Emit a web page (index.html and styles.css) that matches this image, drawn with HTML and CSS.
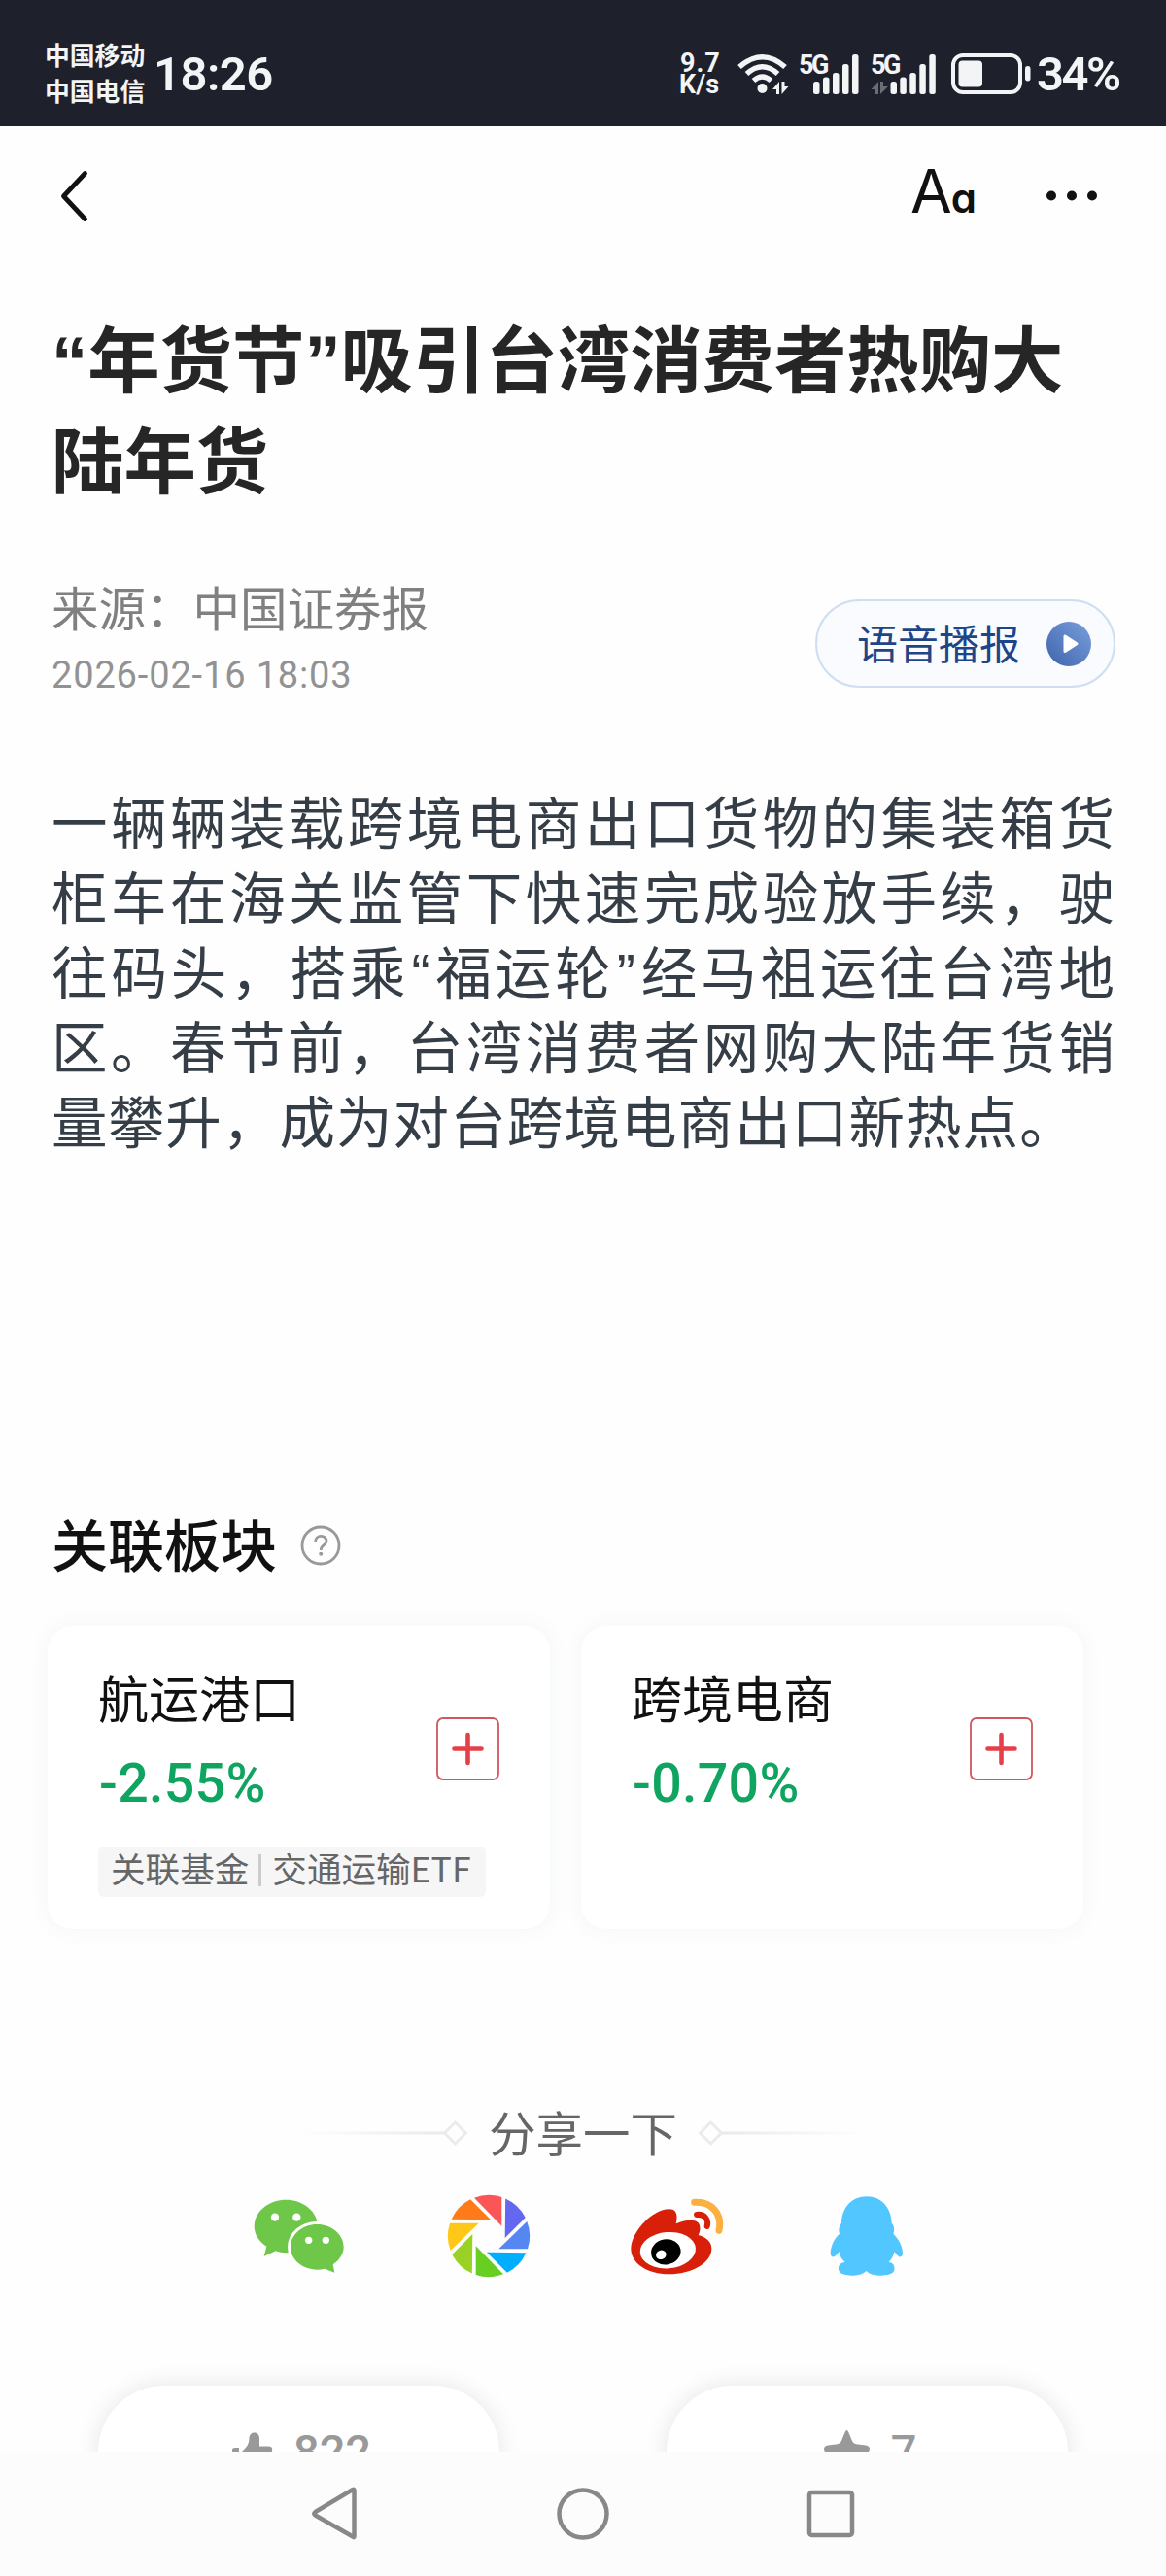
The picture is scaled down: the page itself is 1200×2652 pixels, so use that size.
FILE: index.html
```html
<!DOCTYPE html>
<html lang="zh-CN">
<head>
<meta charset="utf-8">
<title>年货节</title>
<link rel="stylesheet" href="styles.css">
</head>
<body>
<header class="status">
  <div class="carriers"><span>中国移动</span><span>中国电信</span></div>
  <div class="clock">18:26</div>
  <div class="speed"><span class="rate">9.7</span><span>K/s</span></div>
  <svg class="wifi" width="54" height="42" viewBox="758 55 54 42">
    <g fill="none" stroke="#f3f4f5" stroke-width="5.5">
      <path d="M761 69Q784.5 48.500 808 69"/>
      <path d="M768.500 76Q784.500 61.500 800.500 76"/>
      <path d="M775.500 83Q784.500 75 793.500 83"/>
    </g>
    <circle cx="784.500" cy="91" r="5" fill="#f3f4f5"/>
    <path fill="#f3f4f5" d="M795 92L802 84V97H799V92ZM804.500 84H807.500V89H811.500L804.500 97Z"/>
  </svg>
  <div class="cell">
    <span class="net">5G</span>
    <svg width="64" height="42" viewBox="820 55 64 42" fill="#f3f4f5">
      <rect x="837" y="84" width="6.500" height="13" rx="2.500"/><rect x="847" y="79.500" width="6.500" height="17.500" rx="2.500"/><rect x="857" y="75" width="6.500" height="22" rx="2.500"/><rect x="867" y="66" width="6.500" height="31" rx="2.500"/><rect x="877" y="56" width="6.500" height="41" rx="2.500"/>
    </svg>
  </div>
  <div class="cell second">
    <span class="net">5G</span>
    <svg width="69" height="42" viewBox="894 55 69 42" fill="#f3f4f5">
      <path fill="#6a6d75" d="M896.500 92L904 84V97H901V92ZM906 84H909V89H914L906 97Z"/>
      <rect x="916.500" y="84" width="6.500" height="13" rx="2.500"/><rect x="926.300" y="79.500" width="6.500" height="17.500" rx="2.500"/><rect x="936.300" y="75" width="6.500" height="22" rx="2.500"/><rect x="946.300" y="66" width="6.500" height="31" rx="2.500"/><rect x="956.300" y="56" width="6.500" height="41" rx="2.500"/>
    </svg>
  </div>
  <svg class="battery" width="82" height="42" viewBox="979 55 82 42">
    <rect x="981" y="57" width="69" height="38" rx="10" fill="none" stroke="#f3f4f5" stroke-width="4"/>
    <rect x="986.500" y="62.500" width="24.500" height="27" rx="4" fill="#f3f4f5"/>
    <rect x="1055" y="68" width="5.500" height="15.500" rx="2.700" fill="#f3f4f5"/>
  </svg>
  <div class="percent">34%</div>
</header>

<main class="screen">
  <nav class="toolbar">
    <svg width="30" height="54" viewBox="0 0 30 54"><path d="M26.500 4.500L4.500 28L26.500 51.500" fill="none" stroke="#111" stroke-width="4.800" stroke-linecap="round" stroke-linejoin="round"/></svg>
    <div class="fontsize"><span class="big">A</span><span class="small">a</span></div>
    <svg width="54" height="12" viewBox="0 0 54 12" fill="#111"><circle cx="6" cy="6.500" r="5"/><circle cx="27" cy="6.500" r="5"/><circle cx="48" cy="6.500" r="5"/></svg>
  </nav>

  <article>
    <h1><span class="q">“</span>年货节<span class="q">”</span>吸引台湾消费者热购大<br>陆年货</h1>
    <div class="meta">
      <div>
        <div class="source">来源：中国证券报</div>
        <div class="date">2026-02-16 18:03</div>
      </div>
      <button class="voice">语音播报
        <svg width="46" height="46" viewBox="0 0 46 46">
          <defs><linearGradient id="play" x1="0" y1="1" x2="1" y2="0"><stop offset="0" stop-color="#3e63ab"/><stop offset="1" stop-color="#7ba0dd"/></linearGradient></defs>
          <circle cx="23" cy="23" r="23" fill="url(#play)"/>
          <path d="M19 15V30.500L31 22.800Z" fill="#fff" stroke="#fff" stroke-width="3" stroke-linejoin="round"/>
        </svg>
      </button>
    </div>
    <p class="body">
      <span>一辆辆装载跨境电商出口货物的集装箱货</span>
      <span>柜车在海关监管下快速完成验放手续，驶</span>
      <span>往码头，搭乘<i class="q">“</i>福运轮<i class="q">”</i>经马祖运往台湾地</span>
      <span>区。春节前，台湾消费者网购大陆年货销</span>
      <span class="last">量攀升，成为对台跨境电商出口新热点。</span>
    </p>
  </article>

  <section class="related">
    <h2>关联板块
      <svg width="42" height="42" viewBox="0 0 42 42"><circle cx="21" cy="21" r="19" fill="none" stroke="#999" stroke-width="2.800"/><path d="M15.500 17.500C15.500 9.500 27 9.500 27 16.500C27 21 21.200 20.500 21.200 26" fill="none" stroke="#999" stroke-width="2.800"/><circle cx="21.200" cy="29.800" r="2" fill="#999"/></svg>
    </h2>
    <div class="cards">
      <div class="card">
        <div class="name">航运港口</div>
        <div class="change">-2.55%</div>
        <div class="tag"><span>关联基金</span><span class="bar"></span><span>交通运输ETF</span></div>
        <svg class="add" width="65" height="65" viewBox="0 0 65 65"><rect x="1" y="1" width="63" height="63" rx="6" fill="#fff" stroke="#d0565f" stroke-width="1.800"/><path d="M18.500 32.500H46.500M32.500 18V47" stroke="#e5404a" stroke-width="4.600" stroke-linecap="round"/></svg>
      </div>
      <div class="card">
        <div class="name">跨境电商</div>
        <div class="change">-0.70%</div>
        <svg class="add" width="65" height="65" viewBox="0 0 65 65"><rect x="1" y="1" width="63" height="63" rx="6" fill="#fff" stroke="#d0565f" stroke-width="1.800"/><path d="M18.500 32.500H46.500M32.500 18V47" stroke="#e5404a" stroke-width="4.600" stroke-linecap="round"/></svg>
      </div>
    </div>
  </section>

  <section class="share">
    <div class="sharetitle">
      <svg width="164" height="28" viewBox="0 0 164 28"><defs><linearGradient id="fade"><stop offset="0" stop-color="#ececec" stop-opacity="0"/><stop offset="1" stop-color="#e9e9e9"/></linearGradient></defs><rect x="-10" y="12.500" width="149" height="3" fill="url(#fade)"/><path d="M150.500 3L161.500 14L150.500 25L139.500 14Z" fill="none" stroke="#ebebeb" stroke-width="3"/></svg>
      <span>分享一下</span>
      <svg class="flip" width="164" height="28" viewBox="0 0 164 28"><rect x="-10" y="12.500" width="149" height="3" fill="url(#fade)"/><path d="M150.500 3L161.500 14L150.500 25L139.500 14Z" fill="none" stroke="#ebebeb" stroke-width="3"/></svg>
    </div>
    <div class="icons">
      <svg width="93" height="77" viewBox="95 344 279 231">
        <path fill="#6fc74a" d="M195 346C249 346 293 383 293 428C293 473 249 510 195 510Q179 510 163 504L127 521L135 490C112 475 97 453 97 428C97 383 141 346 195 346Z"/>
        <path fill="#6fc74a" stroke="#fff" stroke-width="18" paint-order="stroke" d="M291 422C336 422 373 453 373 492C373 514 360 533 340 546L345 571L314 559Q303 562 291 562C246 562 209 531 209 492C209 453 246 422 291 422Z"/>
        <g fill="#fff"><circle cx="161" cy="400" r="12.500"/><circle cx="228" cy="400" r="12.500"/><circle cx="265" cy="471" r="11"/><circle cx="318" cy="471" r="11"/></g>
      </svg>
      <svg width="84" height="84" viewBox="-42 -42 84 84">
        <defs><path id="blade" d="M-15-39.300A42 42 0 0 1 13.300-40V-10.300Z"/></defs>
        <use href="#blade" fill="#fb5655"/>
        <use href="#blade" fill="#6468f0" transform="rotate(45)"/>
        <use href="#blade" fill="#5586f2" transform="rotate(90)"/>
        <use href="#blade" fill="#00aeff" transform="rotate(135)"/>
        <use href="#blade" fill="#66cf22" transform="rotate(180)"/>
        <use href="#blade" fill="#99d224" transform="rotate(225)"/>
        <use href="#blade" fill="#ffc819" transform="rotate(270)"/>
        <use href="#blade" fill="#ff7a18" transform="rotate(315)"/>
      </svg>
      <svg width="96" height="79" viewBox="155 344 288 237">
        <path fill="#d71f09" d="M150 500C150 450 215 378 268 378C292 378 295 398 289 423C320 410 352 406 361 425C366 438 362 450 358 458C385 465 399 480 399 500C399 545 335 579 268 579C200 579 150 545 150 500Z"/>
        <ellipse cx="264" cy="505" rx="86" ry="56" fill="#fff" transform="rotate(-5 264 505)"/>
        <ellipse cx="258" cy="510" rx="46" ry="39" fill="#000" transform="rotate(-10 258 510)"/>
        <ellipse cx="243" cy="519" rx="16" ry="14" fill="#fff" transform="rotate(-20 243 519)"/>
        <g fill="none" stroke-linecap="round"><path stroke="#fbb03f" stroke-width="21" d="M346 357C398 353 433 392 422 444"/><path stroke="#d71f09" stroke-width="18" d="M353 395C377 392 391 409 385 431"/></g>
      </svg>
      <svg width="76" height="82" viewBox="764 332 228 246">
        <path fill="#52c6ff" d="M878 333C925 333 954 370 955 415C964 425 964 438 960 448C978 465 990 490 989 510C986 525 975 522 964 503C960 518 953 528 946 536C965 538 965 555 962 564C955 578 920 579 900 575C888 572 880 567 877 563C872 567 865 572 853 575C835 579 800 578 793 564C788 555 790 538 811 536C802 528 795 518 793 503C780 522 770 525 766 510C766 490 775 465 794 448C790 438 792 425 800 415C801 370 830 333 878 333Z"/>
      </svg>
    </div>
  </section>

  <section class="actions">
    <div class="pill">
      <svg width="42" height="40" viewBox="0 0 42 40" fill="#999"><path d="M7 16V38H0V18Q0 16 3 16ZM10 20C14 16 17.500 13 17.500 6C17.500-1.500 28-1.500 28 6V14.500H37Q42 14.500 41 19L38 34Q37 38 33 38H10Z"/></svg>
      <span>822</span>
    </div>
    <div class="pill">
      <svg width="48" height="44" viewBox="0 0 48 44" fill="#999"><path d="M23.500 0C25 0 26 4 29 11Q30 13.800 33 14.300L43 15.500Q49 17 46 22L37 31L39 44L23.500 37L8 44L10 31L1 22Q-2 17 4 15.500L14 14.300Q17 13.800 18 11C21 4 22 0 23.500 0Z"/></svg>
      <span>7</span>
    </div>
  </section>
</main>

<footer class="keys">
  <svg width="50" height="58" viewBox="319 2559 50 58"><path d="M364.500 2564V2611Q364.500 2613 363 2611.500L324.500 2589.500Q322 2587.700 324.500 2586L363 2563Q364.500 2562 364.500 2564Z" fill="none" stroke="#888" stroke-width="4.500" stroke-linejoin="round"/></svg>
  <svg width="54" height="54" viewBox="0 0 54 54"><circle cx="27" cy="27" r="24.500" fill="none" stroke="#888" stroke-width="4.500"/></svg>
  <svg width="50" height="50" viewBox="0 0 50 50"><rect x="3" y="3" width="44" height="44" rx="2.500" fill="none" stroke="#888" stroke-width="4.500"/></svg>
</footer>
</body>
</html>
```
FILE: styles.css
```css
* { box-sizing: border-box; margin: 0; padding: 0; }
body {
  width: 1200px; height: 2652px; overflow: hidden;
  display: flex; flex-direction: column;
  background: #fefefe; color: #111;
  font-family: "Noto Sans CJK SC", sans-serif;
}
svg { display: block; flex: none; overflow: visible; }

.status {
  height: 130px; flex: none; display: flex; align-items: flex-start;
  padding: 55px 0 0 46px; background: #1e212b; color: #f3f4f5;
  font-family: Roboto, "Noto Sans CJK SC", sans-serif; font-weight: 600; white-space: nowrap;
}
.carriers { width: 112px; margin-top: -17px; font: 700 25.8px/36.500px "Noto Sans CJK SC", sans-serif; }
.carriers span { display: block; }
.clock { width: 541px; margin-top: 1px; font-size: 49px; line-height: 42px; letter-spacing: -.5px; }
.speed { width: 59px; margin-top: -1px; display: flex; flex-direction: column; font-weight: 700; font-size: 27px; line-height: 22px; }
.speed .rate { letter-spacing: 1px; padding-left: 1px; }
.wifi { margin-right: 8px; }
.cell { display: grid; margin-right: 10px; }
.cell > * { grid-area: 1 / 1; }
.cell.second { margin-right: 16px; }
.net { font-weight: 700; font-size: 27px; line-height: 25px; padding-left: 2px; letter-spacing: -2.500px; }
.percent { margin: 1px 0 0 6px; font-size: 49px; line-height: 42px; letter-spacing: -2.500px; }

.screen { flex: 1; min-height: 0; overflow: hidden; }
.toolbar { height: 142px; padding: 0 70px 0 61px; display: flex; align-items: center; }
.fontsize { margin: 8px 72px 0 auto; font-family: Inter, sans-serif; line-height: 60px; letter-spacing: -1px; font-feature-settings: "cv11"; }
.fontsize .big { font-size: 62px; }
.fontsize .small { font-size: 42px; font-weight: 600; }

article { padding: 42px 53px 0; }
h1 { font-size: 74.400px; line-height: 104px; font-weight: 700; color: #262626; white-space: nowrap; }
.q { font-family: "Liberation Sans", sans-serif; font-style: normal; line-height: 0; }
.body .q { padding: 0 2px; }
.meta { margin-top: 74px; display: flex; justify-content: space-between; }
.source { font-size: 48.500px; line-height: 56px; color: #808080; }
.date { margin-top: 18px; font: 400 38px/50px Roboto, sans-serif; letter-spacing: .85px; color: #929292; }
.voice {
  margin-top: 21px; width: 309px; height: 91px; padding: 0 23px 3px 41px; margin-right: -1px;
  display: flex; align-items: center; justify-content: space-between;
  border: 2px solid #cfdff1; border-radius: 46px; background: #f9fbfe;
  font: 400 42px/60px "Noto Sans CJK SC", sans-serif; color: #1d4587; white-space: nowrap;
}
.voice svg { margin-top: 4px; }
.body { margin-top: 86px; font-size: 57.500px; line-height: 77px; color: #353e46; }
.body span { display: block; text-align: justify; text-align-last: justify; white-space: nowrap; }
.body .last { text-align-last: left; letter-spacing: 1.100px; }

.related { padding: 357px 49px 0; }
h2 { height: 80px; padding-left: 4px; display: flex; align-items: center; gap: 24px; font-size: 58px; line-height: 80px; font-weight: 500; }
h2 svg { margin-top: 5px; }
.cards { margin-top: 46px; display: flex; gap: 32px; }
.card {
  width: 517px; height: 312px; padding: 42px 52px 0; border-radius: 26px;
  display: grid; grid-template-columns: 1fr 65px; grid-template-rows: 62px 70px 1fr; row-gap: 12px;
  background: #fff; box-shadow: 0 0 20px rgba(90, 120, 140, .07);
}
.name { font-size: 52px; line-height: 62px; }
.change { margin-top: 12px; font: 500 55.500px/70px Roboto, sans-serif; letter-spacing: .3px; padding-left: 1px; color: #0fa560; }
.add { grid-column: 2; grid-row: 1 / 3; margin-top: 52px; }
.tag { grid-column: 1 / 3; width: 399px; height: 52px; margin-top: 29px; padding: 0 13px; display: flex; align-items: center; background: #f6f6f6; border-radius: 6px; font-size: 35.600px; line-height: 44px; color: #666; white-space: nowrap; }
.tag span { margin-top: -8px; }
.tag .bar { width: 3px; height: 33px; margin: -4px 11px 0 10px; background: #ccc; }

.share { padding-top: 180px; }
.sharetitle { height: 60px; display: flex; justify-content: center; align-items: center; gap: 21px; font-size: 48.400px; line-height: 60px; color: #666; }
.sharetitle span { margin-top: -5px; }
.flip { transform: scaleX(-1); }
.icons { height: 84px; margin-top: 34px; padding: 0 270px 0 261px; display: flex; align-items: center; justify-content: space-between; }

.actions { margin-top: 112px; padding: 0 101px; display: flex; justify-content: space-between; }
.pill { width: 413px; height: 136px; padding-left: 6px; border-radius: 68px; display: flex; justify-content: center; align-items: center; gap: 21px; background: #fff; box-shadow: 0 0 24px rgba(0, 0, 0, .1); font: 500 47px/56px Roboto, sans-serif; color: #999; }

.keys { height: 128px; flex: none; padding: 0 320px 0 319px; display: flex; align-items: center; justify-content: space-between; background: #fcfcfc; }
```
